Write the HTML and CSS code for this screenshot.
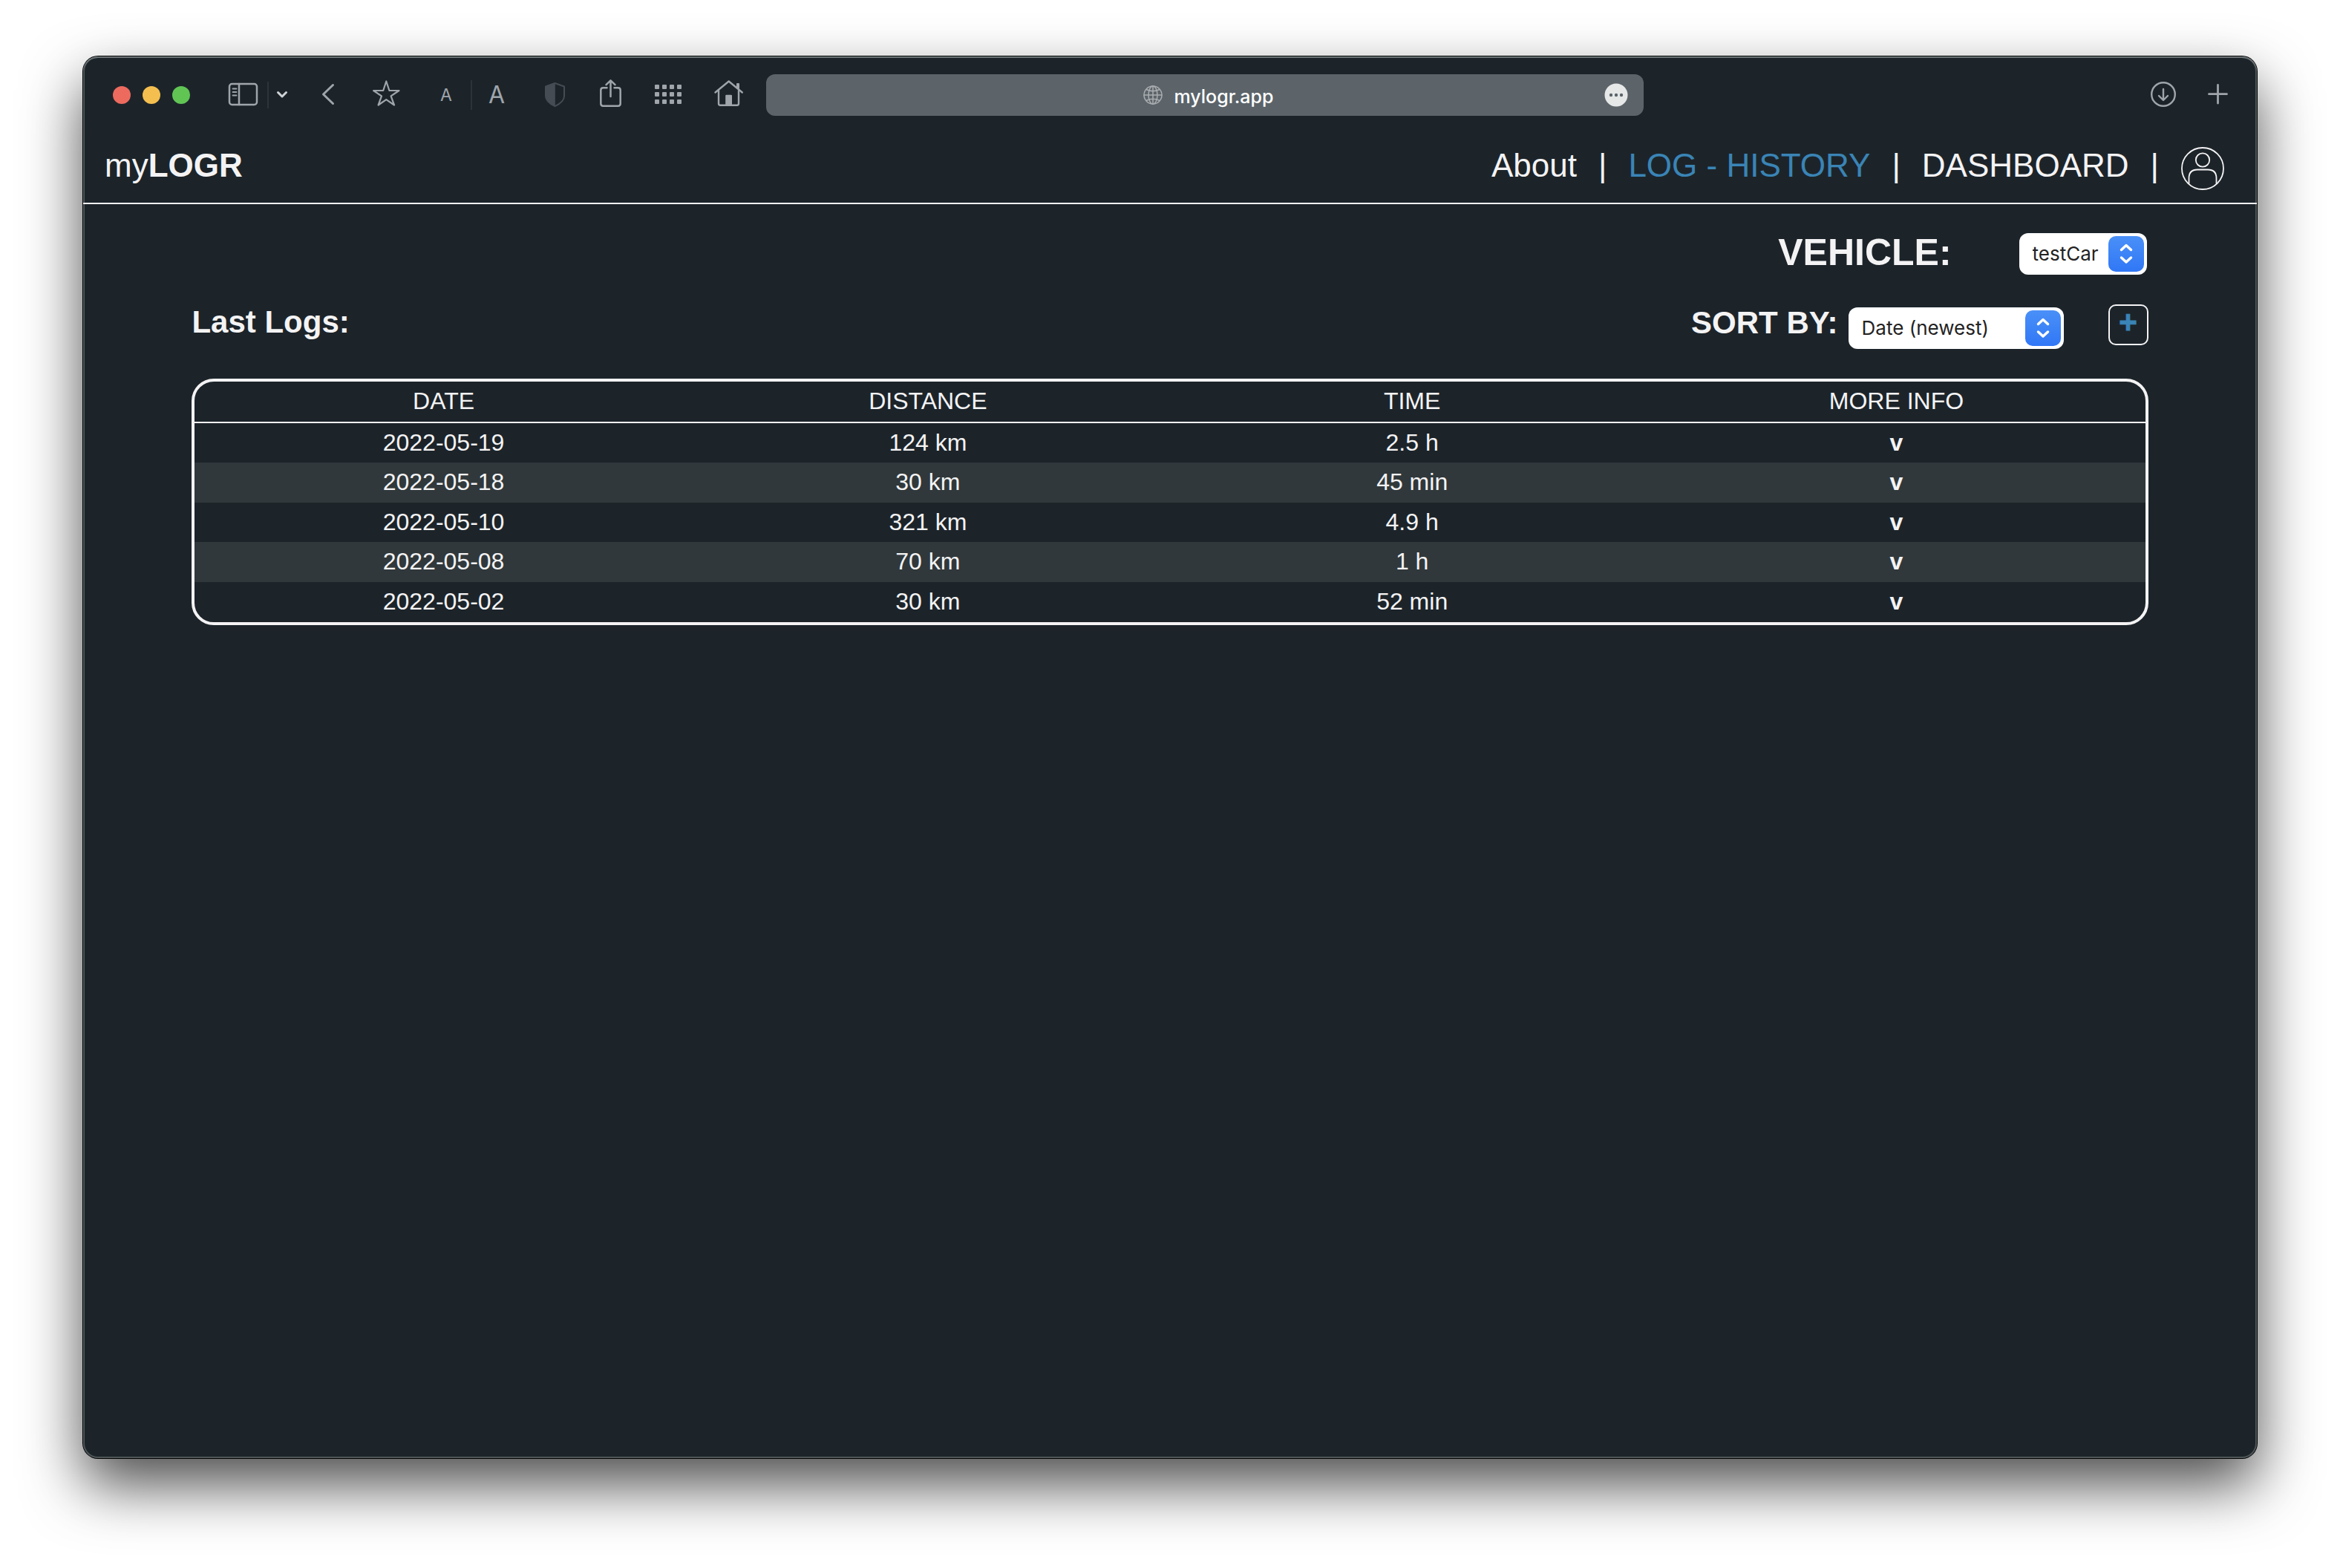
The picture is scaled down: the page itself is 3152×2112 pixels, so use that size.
FILE: index.html
```html
<!DOCTYPE html>
<html lang="en">
<head>
<meta charset="utf-8">
<title>myLOGR</title>
<link rel="stylesheet" href="styles.css">
</head>
<body>
<div class="window">
  <div class="toolbar">
    <div class="tools">
      <div class="lights">
        <button class="light light-close" aria-label="Close"></button>
        <button class="light light-min" aria-label="Minimize"></button>
        <button class="light light-max" aria-label="Zoom"></button>
      </div>
      <button class="tool tool-sidebar" aria-label="Sidebar">
        <svg viewBox="0 0 48 48"><rect x="5" y="9" width="37" height="28" rx="3.5"/><path d="M18 9v28"/><path d="M9.500 15.500h5M9.500 20h5M9.500 24.500h5" stroke-width="1.800"/></svg>
      </button>
      <span class="divider divider-short"></span>
      <button class="tool tool-chevron" aria-label="Tab groups">
        <svg viewBox="0 0 20 48"><path d="M4.500 20.500L10 26l5.500-5.500" stroke-width="3"/></svg>
      </button>
      <button class="tool tool-back" aria-label="Back">
        <svg viewBox="0 0 48 48"><path d="M30.500 10.500L17.500 23l13 12.500" stroke-width="3"/></svg>
      </button>
      <button class="tool tool-star" aria-label="Bookmarks">
        <svg viewBox="0 0 48 48"><path d="M24.300 5.500L28.400 18H41.500L30.600 25.400L35 37.500L24.300 30.200L13.600 37.500L18 25.400L7.100 18H20.200Z" stroke-width="2.200"/></svg>
      </button>
      <button class="tool tool-smaller" aria-label="Smaller text">A</button>
      <span class="divider"></span>
      <button class="tool tool-larger" aria-label="Larger text">A</button>
      <button class="tool tool-shield" aria-label="Privacy report">
        <svg viewBox="0 0 48 48"><path d="M24.500 8L37 12.500V25.500C37 31.500 32 35.500 24.500 39.200C17 35.500 12 31.500 12 25.500V12.500Z" stroke-width="2"/><path class="solid" d="M24.800 8L12 12.500V25.500C12 31.500 17 35.500 24.800 39.200Z"/></svg>
      </button>
      <button class="tool tool-share" aria-label="Share">
        <svg viewBox="0 0 48 48"><path d="M19.500 14.300H14.500q-3.200 0-3.200 3.200V35.500q0 3.200 3.200 3.200H34.500q3.200 0 3.200-3.200V17.500q0-3.200-3.200-3.200H29.500"/><path d="M24.500 4.500V26M18.500 10.200L24.500 4.300L30.500 10.200"/></svg>
      </button>
      <button class="tool tool-grid" aria-label="Top sites">
        <svg viewBox="0 0 48 48"><g class="solid"><rect x="6" y="10" width="6" height="6" rx="1"/><rect x="16" y="10" width="6" height="6" rx="1"/><rect x="26" y="10" width="6" height="6" rx="1"/><rect x="36" y="10" width="6" height="6" rx="1"/><rect x="6" y="20" width="6" height="6" rx="1"/><rect x="16" y="20" width="6" height="6" rx="1"/><rect x="26" y="20" width="6" height="6" rx="1"/><rect x="36" y="20" width="6" height="6" rx="1"/><rect x="6" y="30" width="6" height="6" rx="1"/><rect x="16" y="30" width="6" height="6" rx="1"/><rect x="26" y="30" width="6" height="6" rx="1"/><rect x="36" y="30" width="6" height="6" rx="1"/></g></svg>
      </button>
      <button class="tool tool-home" aria-label="Home">
        <svg viewBox="0 0 48 48"><path d="M6.500 20.500L24.700 5.500L42.800 20.500" stroke-width="2.400"/><path d="M11 18V35.500q0 2.200 2.200 2.200H35.800q2.200 0 2.200-2.200V18" stroke-width="2.400"/><path class="solid" d="M20.200 38V25q0-1.200 1.200-1.200h6.400q1.200 0 1.200 1.200V38ZM35 14V9q0-1 1-1h2q1 0 1 1V18Z"/></svg>
      </button>
    </div>
    <div class="address">
      <div class="site">
        <svg class="globe" viewBox="0 0 26 26" aria-hidden="true"><circle cx="13" cy="13" r="12"/><ellipse cx="13" cy="13" rx="6" ry="12"/><path d="M13 1v24M1 13h24M4 5.500q9 4.500 18 0M4 20.500q9-4.500 18 0"/></svg>
        <input class="url" type="text" aria-label="Address" value="mylogr.app">
      </div>
      <button class="more" aria-label="Page options">
        <svg viewBox="0 0 32 32"><circle cx="16" cy="16" r="15.500" fill="#e6e8e8"/><g fill="#5c646a"><circle cx="9" cy="16" r="2.200"/><circle cx="16" cy="16" r="2.200"/><circle cx="23" cy="16" r="2.200"/></g></svg>
      </button>
    </div>
    <div class="tools tools-end">
      <button class="tool" aria-label="Downloads">
        <svg viewBox="0 0 48 48"><circle cx="24" cy="23" r="15.800" stroke-width="2.400"/><path d="M24 16V30M18 25L24 31L30 25" stroke-width="2.400"/></svg>
      </button>
      <button class="tool" aria-label="New tab">
        <svg viewBox="0 0 48 48"><path d="M23.500 10.500V35M11.500 22.700H35.500" stroke-width="2.800"/></svg>
      </button>
    </div>
  </div>

  <header class="header">
    <a class="logo" href="#">my<b>LOGR</b></a>
    <nav class="nav">
      <a href="#">About</a><span>|</span>
      <a class="current" href="#">LOG - HISTORY</a><span>|</span>
      <a href="#">DASHBOARD</a><span>|</span>
      <a class="account" href="#" aria-label="Account">
        <svg viewBox="0 0 58 58"><circle cx="29" cy="29" r="28"/><circle cx="29" cy="17.500" r="9.200"/><path d="M10.500 49.500V42Q10.500 30.500 22 30.500H36Q47.500 30.500 47.500 42V49.500"/></svg>
      </a>
    </nav>
  </header>

  <main class="content">
    <div class="vehicle">
      <label class="vehicle-label" for="vehicle">VEHICLE:</label>
      <div class="picker picker-vehicle">
        <select id="vehicle"><option>testCar</option></select>
        <svg viewBox="0 0 48 48" aria-hidden="true"><path d="M17.500 18.500L24 12.500L30.500 18.500M17.500 29L24 35L30.500 29"/></svg>
      </div>
    </div>
    <div class="bar">
      <h2 class="title">Last Logs:</h2>
      <label class="title sort-label" for="sort">SORT BY:</label>
      <div class="picker picker-sort">
        <select id="sort"><option>Date (newest)</option></select>
        <svg viewBox="0 0 48 48" aria-hidden="true"><path d="M17.500 18.500L24 12.500L30.500 18.500M17.500 29L24 35L30.500 29"/></svg>
      </div>
      <button class="add" aria-label="Add log">+</button>
    </div>
    <table class="logs">
      <thead>
        <tr><th>DATE</th><th>DISTANCE</th><th>TIME</th><th>MORE INFO</th></tr>
      </thead>
      <tbody>
        <tr><td>2022-05-19</td><td>124 km</td><td>2.5 h</td><td><button class="expand">v</button></td></tr>
        <tr><td>2022-05-18</td><td>30 km</td><td>45 min</td><td><button class="expand">v</button></td></tr>
        <tr><td>2022-05-10</td><td>321 km</td><td>4.9 h</td><td><button class="expand">v</button></td></tr>
        <tr><td>2022-05-08</td><td>70 km</td><td>1 h</td><td><button class="expand">v</button></td></tr>
        <tr><td>2022-05-02</td><td>30 km</td><td>52 min</td><td><button class="expand">v</button></td></tr>
      </tbody>
    </table>
  </main>
</div>
</body>
</html>
```
FILE: styles.css
```css
* {
  box-sizing: border-box;
}

body {
  margin: 0;
  padding: 76px 112px 148px;
  background: #fff;
  color: #f4f3f4;
  font-family: "Liberation Sans", Arial, sans-serif;
}

button {
  margin: 0;
  padding: 0;
  border: 0;
  background: none;
  color: inherit;
  font: inherit;
}

a {
  color: inherit;
  text-decoration: none;
}

svg {
  display: block;
  fill: none;
  stroke: currentColor;
  stroke-linecap: round;
  stroke-linejoin: round;
}

.solid {
  fill: currentColor;
  stroke: none;
}

.window {
  min-height: calc(100vh - 224px);
  border-radius: 20px;
  background: #1c242a;
  box-shadow:
    inset 0 2px 0 #6c7476,
    inset 0 0 0 2px #4e5658,
    0 0 0 1px #000,
    0 36px 80px rgba(0, 0, 0, 0.7);
}

/* Browser toolbar */

.toolbar {
  display: grid;
  grid-template-columns: 920px 1182fr 826fr;
  align-items: center;
  height: 104px;
  color: #9fa5ab;
}

.tools {
  display: flex;
  align-items: center;
  padding-left: 40px;
}

.tools-end {
  justify-content: flex-end;
  gap: 26px;
  padding: 0 28px 0 0;
}

.lights {
  display: flex;
  gap: 16px;
}

.light {
  width: 24px;
  height: 24px;
  border-radius: 50%;
}

.light-close { background: #ed6a5e; }
.light-min { background: #f5bf4f; }
.light-max { background: #61c554; }

.tool {
  display: block;
  flex: none;
  width: 48px;
  height: 48px;
  font: 400 23px/48px Inter, sans-serif;
  text-align: center;
}

.tool svg {
  width: 100%;
  height: 48px;
  stroke-width: 2.5;
}

.divider {
  width: 2px;
  height: 40px;
  margin: 0 9px;
  background: #2c343a;
}

.divider-short {
  height: 36px;
  margin: 0 8px;
}

.tool-sidebar { margin-left: 48px; }
.tool-chevron { width: 20px; color: #d0d3d6; }
.tool-back { margin-left: 28px; }
.tool-star { margin-left: 30px; }
.tool-smaller { margin-left: 33px; }
.tool-larger { font-size: 32px; }
.tool-shield { margin-left: 30px; color: #454c53; }
.tool-share { margin-left: 27px; }
.tool-grid { margin-left: 30px; }
.tool-home { margin-left: 33px; }

.address {
  display: grid;
  grid-template-columns: 1fr auto 1fr;
  align-items: center;
  height: 56px;
  padding: 0 21px 0 32px;
  border-radius: 12px;
  background: #5c646a;
}

.site {
  display: flex;
  grid-column: 2;
  align-items: center;
  gap: 16px;
}

.globe {
  width: 26px;
  height: 26px;
  stroke: #a9adb0;
  stroke-width: 1.5;
}

.url {
  width: 136px;
  height: 48px;
  padding: 3px 0 0;
  border: 0;
  background: none;
  color: #fff;
  font: 500 25px/45px Inter, sans-serif;
}

.more {
  justify-self: end;
}

.more svg {
  width: 32px;
  height: 32px;
  stroke: none;
}

/* Site header */

.header {
  display: flex;
  align-items: center;
  justify-content: space-between;
  height: 95px;
  padding: 0 44px 0 29px;
  border-bottom: 2px solid #f4f3f4;
  font-size: 44px;
  line-height: 50px;
}

.logo,
.nav > * {
  padding-bottom: 8px;
}

.nav {
  display: flex;
  align-items: center;
  gap: 29px;
}

.nav .current {
  color: #3a84b6;
}

.nav .account {
  padding: 0 0 0 1px;
}

.account svg {
  width: 58px;
  height: 58px;
  stroke-width: 1.8;
  stroke-linecap: butt;
}

/* Page content */

.content {
  padding: 39px 5% 40px;
}

.vehicle {
  display: flex;
  align-items: center;
  justify-content: flex-end;
  gap: 91px;
  padding-right: 2px;
}

.vehicle-label {
  padding-bottom: 4px;
  font-size: 50px;
  font-weight: 700;
  line-height: 52px;
}

.picker {
  position: relative;
}

.picker-vehicle { width: 172px; }
.picker-sort { width: 290px; }

.picker select {
  display: block;
  width: 100%;
  height: 56px;
  padding: 0 48px 0 18px;
  border: 0;
  border-radius: 12px;
  appearance: none;
  background: #fff;
  color: #232323;
  font: 400 26px/56px Inter, sans-serif;
}

.picker svg {
  position: absolute;
  top: 4px;
  right: 4px;
  width: 48px;
  height: 48px;
  border-radius: 10px;
  background: linear-gradient(#4a90f8, #3077f6);
  stroke: #fff;
  stroke-width: 3.5;
  pointer-events: none;
}

.bar {
  display: flex;
  align-items: flex-start;
  margin: 40px 0;
}

.title {
  margin: 0;
  font-size: 42px;
  font-weight: 700;
  line-height: 48px;
}

.sort-label {
  margin-left: auto;
  line-height: 50px;
}

.picker-sort {
  margin: 4px 60px 0 14px;
}

.add {
  width: 54px;
  height: 55px;
  padding-bottom: 8px;
  border: 2px solid #f4f3f4;
  border-radius: 10px;
  color: #3a84b6;
  font-size: 42px;
  font-weight: 700;
  line-height: 43px;
  -webkit-text-stroke: 1px currentColor;
}

.logs {
  display: block;
  overflow: hidden;
  border: 4px solid #f4f3f4;
  border-radius: 30px;
  font-size: 32px;
  line-height: 52px;
  text-align: center;
}

.logs thead,
.logs tbody {
  display: block;
}

.logs tr {
  display: grid;
  grid-template-columns: repeat(4, 1fr);
  height: 54px;
  padding: 0 9px;
}

.logs thead tr {
  height: 56px;
  border-bottom: 2px solid #f4f3f4;
}

.logs th,
.logs td {
  padding: 0;
  font-weight: 400;
}

.logs tbody tr:nth-child(odd):not(:last-child) {
  height: 53px;
}

.logs tbody tr:nth-child(even) {
  background: #30383b;
}

.expand {
  font-weight: 700;
}
```
